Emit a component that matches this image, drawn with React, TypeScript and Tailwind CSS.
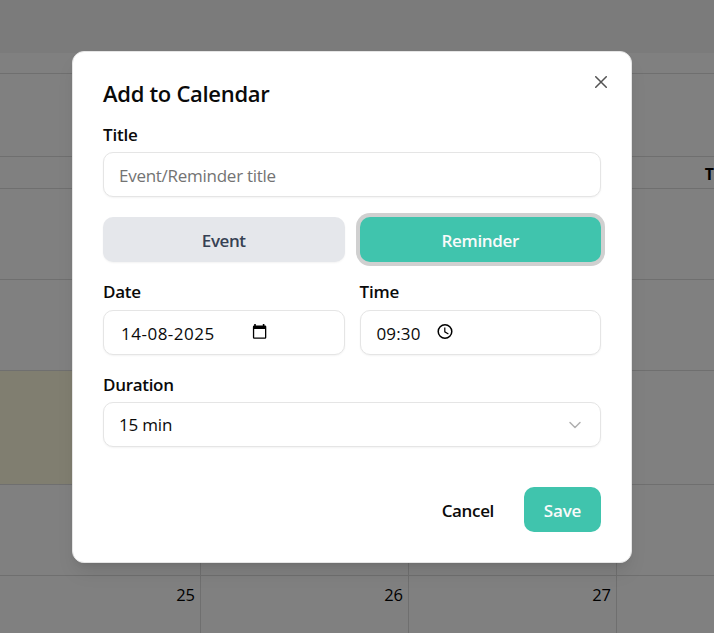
import React from 'react';

const fieldClass =
  'flex h-[45px] items-center rounded-[10px] border border-[#e5e5e5] bg-white shadow-[0_1px_2px_rgba(0,0,0,0.05)]';
const labelClass = 'text-[17px] font-semibold leading-[22px] text-[#0a0a0a]';

function Calendar() {
  const weeks = [
    { id: 'w1', height: 'h-[91px]', days: ['', '', '', ''] },
    { id: 'w2', height: 'h-[91px]', days: ['', '', '', ''] },
    { id: 'w3', height: 'h-[114px]', days: ['', '', '', ''], today: true },
    { id: 'w4', height: 'h-[91px]', days: ['', '', '', ''] },
    { id: 'w5', height: 'h-[91px]', days: ['25', '26', '27', ''] },
  ];
  return (
    <div className="h-full overflow-hidden bg-[#808080] text-black">
      <div className="h-[53px] bg-[#7b7b7b]" />
      <div className="h-[21px] border-b border-[#6f6f6f]" />
      <div className="h-[83px] border-b border-[#6f6f6f]" />
      <div className="-ml-[7px] grid h-8 w-[832px] grid-cols-4 items-center border-b border-[#6f6f6f] text-center text-[16px] font-bold">
        <span>Mon</span>
        <span>Tue</span>
        <span>Wed</span>
        <span className="relative -left-px top-px">Thu</span>
      </div>
      {weeks.map((week) => (
        <div
          key={week.id}
          className={`-ml-[7px] grid w-[832px] grid-cols-4 border-b border-[#6f6f6f] ${week.height}`}
        >
          {week.days.map((day, i) => (
            <div
              key={i}
              className={`border-r border-[#6f6f6f] pr-[5px] pt-[8px] text-right text-[16.5px] leading-[22px] ${
                week.today && i === 0 ? 'bg-[#807e70]' : ''
              }`}
            >
              {day}
            </div>
          ))}
        </div>
      ))}
    </div>
  );
}

export default function App() {
  return (
    <div className="relative h-[633px] w-[714px] overflow-hidden font-['Open_Sans','Noto_Sans',sans-serif]">
      <Calendar />
      <div
        role="dialog"
        className="absolute left-[72px] top-[51px] h-[512px] w-[560px] rounded-[12px] border border-[#e5e5e5] bg-white px-[30px] pt-[29px] text-[#0a0a0a] shadow-[0_12px_19px_-4px_rgba(0,0,0,0.1),0_5px_7px_-5px_rgba(0,0,0,0.1)]"
      >
        <button aria-label="Close" className="absolute right-[24px] top-[24px]">
          <svg width="12" height="12" viewBox="0 0 12 12" fill="none" stroke="#535353" strokeWidth="1.5" strokeLinecap="round">
            <path d="M.75.75l10.5 10.5M11.25.75L.75 11.25" />
          </svg>
        </button>
        <h2 className="text-[22px] font-semibold leading-[24px] tracking-[-0.3px]">Add to Calendar</h2>
        <div className={`mt-[19px] tracking-[-0.2px] ${labelClass}`}>Title</div>
        <div className={`mt-[6px] px-[15px] pt-[2px] ${fieldClass}`}>
          <span className="text-[17px] tracking-[-0.27px] text-[#737373]">Event/Reminder title</span>
        </div>
        <div className="mt-5 grid grid-cols-2 gap-[15px]">
          <button className="h-[45px] rounded-[10px] bg-[#e5e7eb] pt-[2px] text-[17px] font-semibold tracking-[-0.4px] text-[#364153] shadow-[0_1px_2px_rgba(0,0,0,0.05)]">
            Event
          </button>
          <button className="h-[45px] rounded-[10px] bg-[#40c4ad] pt-[2px] text-[17px] font-semibold tracking-[-0.35px] text-[#fafafa] shadow-[0_0_0_4px_#d0d0d0]">
            Reminder
          </button>
        </div>
        <div className="mt-[19px] grid grid-cols-2 gap-[15px]">
          <div>
            <div className={`tracking-[-0.3px] ${labelClass}`}>Date</div>
            <div className={`mt-[7px] pl-[17px] pt-[2px] ${fieldClass}`}>
              <span className="w-[130px] text-[17px] tracking-[0.5px]">14-08-2025</span>
              <svg width="17" height="17" viewBox="0 0 17 17" className="-mt-1">
                <path d="M3.2 1h1.6v1.5h7V1h1.6v1.5h.6q1.3 0 1.3 1.3v10.7q0 1.3-1.3 1.3H3.2q-1.3 0-1.3-1.3V3.8q0-1.3 1.3-1.3zM3.2 6v8.4H14V6z" fill="#000" fillRule="evenodd" />
              </svg>
            </div>
          </div>
          <div>
            <div className={`tracking-[-0.2px] ${labelClass}`}>Time</div>
            <div className={`mt-[7px] pl-[16px] pt-[2px] ${fieldClass}`}>
              <span className="w-[60px] text-[17px] tracking-[0.15px]">09:30</span>
              <svg width="17" height="17" viewBox="0 0 17 17" fill="none" stroke="#000" className="-mt-1">
                <circle cx="8" cy="8.5" r="6.8" strokeWidth="1.5" />
                <path d="M7.8 4.5v4.3l3.6 2.1" strokeWidth="1.2" />
              </svg>
            </div>
          </div>
        </div>
        <div className={`mt-[19px] tracking-[-0.3px] ${labelClass}`}>Duration</div>
        <div className={`mt-[6px] justify-between px-[15px] ${fieldClass}`}>
          <span className="pt-px text-[17px] tracking-[-0.2px]">15 min</span>
          <svg width="20" height="20" viewBox="0 0 24 24" fill="none" stroke="#b0b0b0" strokeWidth="1.8" strokeLinecap="round" strokeLinejoin="round">
            <path d="m6 9 6 6 6-6" />
          </svg>
        </div>
        <div className="mt-10 flex items-center justify-end gap-[30px]">
          <button className="pt-[2px] text-[17px] font-semibold tracking-[-0.35px]">Cancel</button>
          <button className="h-[45px] w-[77px] rounded-[10px] bg-[#40c4ad] pt-[2px] text-[17px] font-semibold tracking-[-0.2px] text-[#fafafa]">
            Save
          </button>
        </div>
      </div>
    </div>
  );
}
